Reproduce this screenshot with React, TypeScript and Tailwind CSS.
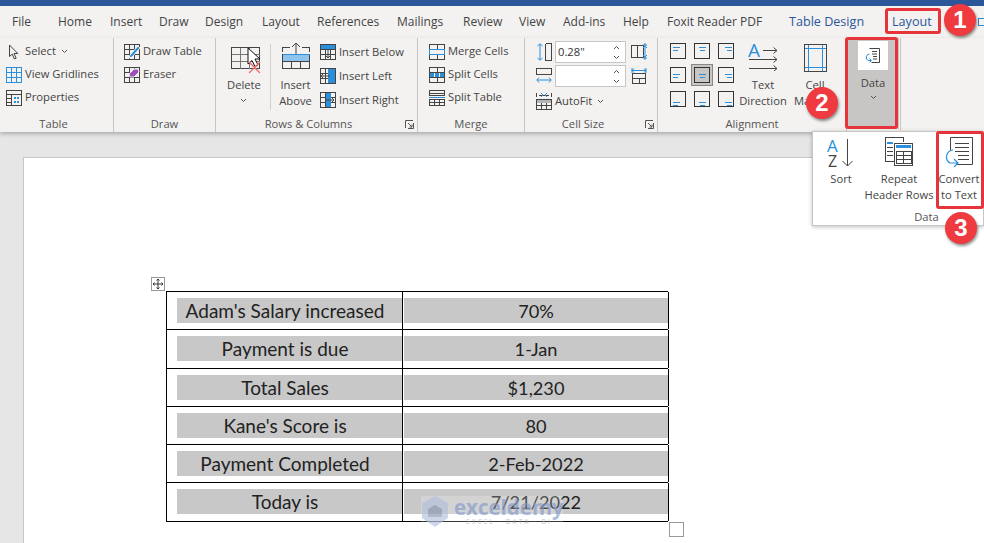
import React from "react";

const D = "#444444";
const B = "#2b8fdc";

const Ic = ({ w = 16, h = 16, children }: { w?: number; h?: number; children: React.ReactNode }) => (
  <svg width={w} height={h} viewBox={`0 0 ${w} ${h}`} fill="none" className="shrink-0" shapeRendering="crispEdges">{children}</svg>
);

const Chevron = ({ className = "" }: { className?: string }) => (
  <svg width="7" height="5" viewBox="0 0 7 5" fill="none" className={className}><path d="M1 1l2.5 2.5L6 1" stroke="#555" strokeWidth="1" /></svg>
);

const Launcher = () => (
  <svg width="9" height="9" viewBox="0 0 9 9" fill="none"><path d="M.5 8V.5H8M8.5 3v5.5H3M3 3l4 4M7 4.5V7H4.5" stroke="#555" /></svg>
);

const GridLines = ({ x = 0.5, y = 0.5, w = 15, h = 15, cols = [5, 10], rows = [5, 10], c = D }: any) => (
  <g stroke={c}>
    <rect x={x} y={y} width={w} height={h} />
    {cols.map((k: number) => <path key={"c" + k} d={`M${x + k} ${y}V${y + h}`} />)}
    {rows.map((k: number) => <path key={"r" + k} d={`M${x} ${y + k}H${x + w}`} />)}
  </g>
);

const icons: Record<string, React.ReactNode> = {
  select: <Ic><path d="M3.5 1v11.5l2.7-2.4 2.2 4.9 1.8-.8-2.2-4.7h3.8z" stroke={D} shapeRendering="auto" /></Ic>,
  view: <Ic><GridLines c={B} /></Ic>,
  props: <Ic><rect x=".5" y=".5" width="15" height="15" stroke={D} /><path d="M.5 4.5h15M5.5 4.5v11M.5 8.5h5M.5 12h5" stroke={D} /><rect x="8" y="7" width="2" height="2" fill={B} /><rect x="11" y="7" width="2" height="2" fill={B} /><rect x="8" y="11" width="2" height="2" fill={B} /><rect x="11" y="11" width="2" height="2" fill={B} /></Ic>,
  draw: <Ic><GridLines /><path d="M6 11l8-9 2 2-8 9-3 1z" fill={B} stroke="#f3f2f1" shapeRendering="auto" /></Ic>,
  eraser: <Ic><GridLines /><path d="M5 7l5-5h4l1 3-5 5H6z" fill="#a04fc0" stroke="#f3f2f1" shapeRendering="auto" /></Ic>,
  below: <Ic><GridLines /><rect x="1" y="1" width="14" height="4" fill={B} /><path d="M8 5v9M5 11l3 3 3-3" stroke={D} shapeRendering="auto" /></Ic>,
  left: <Ic><GridLines /><rect x="8" y="1" width="7" height="14" fill={B} /><path d="M10 8H1M4 5L1 8l3 3" stroke={D} shapeRendering="auto" /></Ic>,
  right: <Ic><GridLines /><rect x="6" y="1" width="5" height="14" fill={B} /><path d="M5 8h9M11 5l3 3-3 3" stroke={D} shapeRendering="auto" /></Ic>,
  merge: <Ic><rect x=".5" y=".5" width="15" height="15" stroke={D} /><path d="M.5 5.5h15M.5 10.5h15M8 .5v5M8 10.5v5" stroke={D} /><path d="M.5 5.5h15v5H.5z" stroke={B} /></Ic>,
  split: <Ic><rect x=".5" y=".5" width="15" height="15" stroke={D} /><path d="M.5 5.5h15M.5 10.5h15M8 .5v5M8 10.5v5" stroke={D} /><rect x="1" y="6" width="14" height="4" fill={B} /><path d="M5.5 6v4M10.5 6v4" stroke="#fff" /></Ic>,
  splitT: <Ic><rect x=".5" y=".5" width="15" height="5" stroke={D} /><path d="M0 7.5h16" stroke={B} /><rect x=".5" y="9.5" width="15" height="6" stroke={D} /><path d="M.5 3h15M5.5 9.5v6M10.5 9.5v6M.5 12.5h15" stroke={D} /></Ic>,
  height: <Ic h={18}><path d="M4 1v16M1.5 3L4 .8 6.5 3M1.5 15L4 17.2 6.5 15" stroke={B} shapeRendering="auto" /><path d="M9.5 .5h5.5v16.5H9.500" stroke={D} /><path d="M9.500.5v17" stroke={D} /></Ic>,
  width: <Ic h={18}><rect x=".5" y="1.500" width="15" height="6" stroke={D} /><path d="M1 13h14M3 10.500L.8 13 3 15.500M13 10.500L15.200 13 13 15.500" stroke={B} shapeRendering="auto" /></Ic>,
  distH: <Ic h={18}><rect x=".5" y="2.500" width="12" height="12" stroke={D} /><path d="M6.500 2.500v12" stroke={D} /><path d="M14 0v17M11.500 2l2.500 0 2.500 0M11.500 15h5M12 5l2-2 2 2M12 12l2 2 2-2" stroke={B} shapeRendering="auto" /></Ic>,
  distW: <Ic h={18}><path d="M1 1v5M15 1v5M1 3.500h14M3 1.500L1 3.500l2 2M13 1.500l2 2-2 2" stroke={B} shapeRendering="auto" /><rect x="1.500" y="6.500" width="13" height="10" stroke={D} /><path d="M1.500 11.500h13M8 11.500v5" stroke={D} /></Ic>,
  autofit: <Ic h={18}><path d="M.5 1v4M15.500 1v4M3 3h10" stroke={D} /><path d="M5 1l2 2M11 1L9 3M5 5l2-2M11 5L9 3" stroke={B} shapeRendering="auto" /><rect x=".5" y="7.500" width="15" height="10" stroke={D} /><rect x="1" y="8" width="14" height="3" fill="#b5b5b5" /><path d="M.5 13h15M5.500 11v6M10.500 11v6" stroke={D} /></Ic>,
};

const Row = ({ icon, label, chev, gap = "gap-[3px]", h = "h-[23px]" }: { icon: string; label: string; chev?: boolean; gap?: string; h?: string }) => (
  <div className={`flex items-center ${gap} ${h}`}>
    {icons[icon]}
    <span className="whitespace-nowrap">{label}</span>
    {chev && <Chevron className="ml-[2px]" />}
  </div>
);

const Group = ({ w, label, launcher, labelClass = "", children, className = "" }: { w: string; label: string; launcher?: boolean; labelClass?: string; children: React.ReactNode; className?: string }) => (
  <div className={`${w} h-full shrink-0 border-r border-[#c8c6c4] relative flex flex-col`}>
    <div className={`flex-1 min-h-0 ${className}`}>{children}</div>
    <div className={`h-[16px] text-center leading-[16px] text-[#555] ${labelClass}`}>{label}</div>
    {launcher && <div className="absolute right-[3px] bottom-[3px] flex"><Launcher /></div>}
  </div>
);

const AlignCell = ({ v, h, active }: { v: number; h: number; active?: boolean }) => {
  const y = v === 0 ? 4 : v === 1 ? 6.5 : 11;
  const x1 = h === 0 ? 3 : h === 1 ? 5 : 7;
  return (
    <div className={`w-[22px] h-[22px] flex items-center justify-center ${active ? "bg-[#c8c6c4] border border-[#8a8886]" : ""}`}>
      <Ic>
        <rect x=".5" y=".5" width="15" height="15" stroke="#333" />
        <path d={`M${x1} ${y + 0.5}h7M${x1 + (h === 2 ? 2 : h === 1 ? 1 : 0)} ${y + 3.5}h5`} stroke={B} />
      </Ic>
    </div>
  );
};

const Spin = ({ value }: { value?: string }) => (
  <div className="w-[71px] h-[22px] bg-white border border-[#c8c6c4] flex items-center justify-between pl-[2px] pr-[5px]">
    <span className="text-[#333]">{value}</span>
    <svg width="7" height="15" viewBox="0 0 7 15" fill="none"><path d="M1 4l2.500-2.500L6 4M1 11l2.500 2.500L6 11" stroke="#555" /></svg>
  </div>
);

const tabs: [string, string][] = [
  ["File", "w-[46px]"], ["Home", "w-[52px]"], ["Insert", "w-[49px]"], ["Draw", "w-[46px]"], ["Design", "w-[57px]"],
  ["Layout", "w-[55px]"], ["References", "w-[80px]"], ["Mailings", "w-[66px]"], ["Review", "w-[56px]"], ["View", "w-[44px]"],
  ["Add-ins", "w-[60px]"], ["Help", "w-[44px]"], ["Foxit Reader PDF", "w-[122px]"],
];

const rows = [
  ["Adam's Salary increased", "70%"], ["Payment is due", "1-Jan"], ["Total Sales", "$1,230"],
  ["Kane's Score is", "80"], ["Payment Completed", "2-Feb-2022"], ["Today is", "7/21/2022"],
];

const Badge = ({ n, className }: { n: number; className: string }) => (
  <div className={`absolute w-[32px] h-[32px] rounded-full bg-[#ef3b3f] text-white flex items-center justify-center text-[24px] font-bold shadow-[1px_2px_3px_rgba(0,0,0,0.45)] z-30 ${className}`} style={{ fontFamily: '"Liberation Sans", sans-serif' }}>{n}</div>
);

const RedBox = ({ className }: { className: string }) => (
  <div className={`absolute border-[3px] border-[#e5343a] rounded-[3px] z-20 pointer-events-none ${className}`} />
);

export default function App() {
  return (
    <div className="relative w-[984px] h-[543px] overflow-hidden flex flex-col bg-[#e6e6e6] text-[11.200px] text-[#444]" style={{ fontFamily: '"Open Sans", "Noto Sans", sans-serif' }}>
      <div className="h-[6px] bg-[#2b579a] shrink-0" />
      <div className="h-[32px] bg-[#f3f2f1] shrink-0 flex items-center pl-[12px] text-[12px] text-[#444]">
        {tabs.map(([t, w]) => <div key={t} className={`${w} whitespace-nowrap`}>{t}</div>)}
        <div className="text-[#2b579a] w-[103px] whitespace-nowrap text-[12.600px]">Table Design</div>
        <div className="text-[#2b579a] text-[12.600px]">Layout</div>
        <div className="ml-auto w-[6px] h-[8px] border border-[#2b8fdc] border-r-0" />
      </div>

      <div className="h-[94px] bg-[#f3f2f1] shrink-0 flex shadow-[0_2px_4px_rgba(0,0,0,0.25)] z-10 relative">
        <Group w="w-[114px]" label="Table" labelClass="pr-[6px]" className="pl-[6px] pt-[2px]">
          <Row icon="select" label="Select" chev />
          <Row icon="view" label="View Gridlines" />
          <Row icon="props" label="Properties" />
        </Group>
        <Group w="w-[102px]" label="Draw" className="pl-[10px] pt-[2px]">
          <Row icon="draw" label="Draw Table" />
          <Row icon="eraser" label="Eraser" />
        </Group>
        <Group w="w-[202px]" label="Rows & Columns" labelClass="pr-[16px]" launcher className="flex pt-[2px]">
          <div className="w-[54px] ml-[1px] flex flex-col items-center border-r border-[#d2d0ce] h-[66px] mt-[4px]">
            <div className="relative h-[30px] mt-[2px] pl-[14px] w-full">
              <Ic w={30} h={24}>
                <rect x=".5" y="1.500" width="28" height="21" stroke={D} />
                <path d="M.5 8.500h28M.5 15.500h28M9.500 1.500v21M18.500 1.500v21" stroke="#777" />
              </Ic>
              <svg width="14" height="22" viewBox="0 0 14 22" className="absolute left-[30px] top-[1px]"><path d="M1 1v16l4-3.500 3 6 3-1.500-3-6h5z" fill="#fff" stroke="#111" /></svg>
              <svg width="13" height="13" viewBox="0 0 13 13" className="absolute left-[31px] top-[15px]"><path d="M1 1l11 11M12 1L1 12" stroke="#ef6b6b" strokeWidth="1.300" /></svg>
            </div>
            <div className="mt-[1px] leading-[16px] pl-[1px]">Delete</div>
            <Chevron className="mt-[5px]" />
          </div>
          <div className="w-[49px] flex flex-col items-center">
            <div className="h-[33px] pt-[2px]">
              <Ic w={28} h={28}>
                <path d="M.5 10V5.500H8M20 5.500h7.500V10" stroke={D} />
                <path d="M14 1v17M10 5l4-4 4 4" stroke={D} shapeRendering="auto" />
                <rect x=".5" y="12" width="27" height="14" stroke={D} />
                <rect x="1" y="12" width="26" height="7" fill="#8cc4ee" />
                <path d="M.5 12.500h27" stroke={B} />
                <path d="M.5 19.500h27M9.500 19.500v7M18.500 19.500v7" stroke={D} />
              </Ic>
            </div>
            <div className="mt-[4px] leading-[16px] text-center whitespace-nowrap">Insert<br />Above</div>
          </div>
          <div>
            <Row icon="below" label="Insert Below" h="h-[24px]" />
            <Row icon="left" label="Insert Left" h="h-[24px]" />
            <Row icon="right" label="Insert Right" h="h-[24px]" />
          </div>
        </Group>
        <Group w="w-[107px]" label="Merge" className="pl-[11px] pt-[2px]">
          <Row icon="merge" label="Merge Cells" />
          <Row icon="split" label="Split Cells" />
          <Row icon="splitT" label="Split Table" />
        </Group>
        <Group w="w-[133px]" label="Cell Size" labelClass="pr-[16px]" launcher className="pl-[11px] pt-[2px]">
          <div className="flex items-center gap-[3px] h-[24px]">{icons.height}<Spin value={'0.28"'} /><span className="ml-[2px] flex">{icons.distH}</span></div>
          <div className="flex items-center gap-[3px] h-[24px]">{icons.width}<Spin /><span className="ml-[2px] flex">{icons.distW}</span></div>
          <div className="flex items-center gap-[3px] h-[24px] mt-[1px]">{icons.autofit}<span>AutoFit</span><Chevron className="ml-[2px]" /></div>
        </Group>
        <Group w="w-[189px]" label="Alignment" className="flex pl-[9px] pt-[2px]">
          <div className="grid grid-cols-[22px_22px_22px] gap-x-[2px] gap-y-[2px] h-fit">
            {[0, 1, 2].flatMap((v) => [0, 1, 2].map((h) => <AlignCell key={`${v}${h}`} v={v} h={h} active={v === 1 && h === 1} />))}
          </div>
          <div className="w-[52px] flex flex-col items-center shrink-0">
            <div className="h-[33px] pt-[3px] flex justify-center">
              <svg width="30" height="28" viewBox="0 0 30 28" fill="none">
                <text x="0" y="14" fontSize="19" fill={B} fontFamily="Open Sans">A</text>
                <path d="M15 7.500h14M25.500 4.500l3.500 3-3.500 3M1 16.500h28M25.500 13.500l3.500 3-3.500 3M1 25.500h28M25.500 22.500l3.500 3-3.500 3" stroke={D} />
              </svg>
            </div>
            <div className="mt-[4px] leading-[16px] text-center whitespace-nowrap">Text<br />Direction</div>
          </div>
          <div className="w-[52px] flex flex-col items-center shrink-0">
            <div className="h-[33px] pt-[4px] flex justify-center">
              <Ic w={23} h={28}>
                <rect x=".5" y=".5" width="22" height="27" stroke={D} />
                <path d="M4.500 1v26M18.500 1v26M1 4.500h21M1 23.500h21" stroke={B} />
              </Ic>
            </div>
            <div className="mt-[4px] leading-[16px] text-center whitespace-nowrap">Cell<br />Margins</div>
          </div>
        </Group>
        <div className="w-[52px] h-[91px] bg-[#c8c6c4] flex flex-col items-center shrink-0">
          <div className="w-[30px] h-[29px] bg-white mt-[3px] flex items-center justify-center">
            <svg width="18" height="18" viewBox="0 0 18 18" fill="none">
              <path d="M5.500 1.500h10v14h-8" stroke={D} /><path d="M8 4.500h5M8 7h5M9 9.500h4M9 12h4" stroke={D} />
              <path d="M5.500 7A3.500 3.500 0 0 0 4 13.500h3M5.500 11.500l2 2-2 2" stroke={B} />
            </svg>
          </div>
          <div className="mt-[5px] leading-[16px] text-[#444]">Data</div>
          <Chevron className="mt-[4px]" />
        </div>
        <div className="ml-[1px] w-[1px] h-[92px] bg-[#c8c6c4]" />
      </div>

      <div className="flex-1 min-h-0 pt-[25px] pl-[23px]">
        <div className="h-[400px] bg-white border-l border-t border-[#c6c6c6] pt-[133px] pl-[142px] relative">
          <div className="w-[502px] border-t border-l border-black leading-[26px] text-[#222]" style={{ fontFamily: "Lato, sans-serif" }}>
            {rows.map(([a, b]) => (
              <div key={a} className="grid grid-cols-[236px_266px] h-[38.300px] border-b border-black">
                <div className="border-r border-black pl-[10px] pt-[6px]">
                  <div className="h-[25px] bg-[#c8c8c8] pr-[9px] text-center text-[19px] whitespace-nowrap">{a}</div>
                </div>
                <div className="border-r border-black pl-[1px] pt-[6px]"><div className="h-[25px] bg-[#c8c8c8] text-center text-[18.200px]">{b}</div></div>
              </div>
            ))}
          </div>
        </div>
      </div>

      {/* table handles */}
      <div className="absolute left-[151px] top-[277px] w-[14px] h-[14px] border border-[#999] bg-white flex items-center justify-center">
        <svg width="12" height="12" viewBox="0 0 12 12" fill="none"><path d="M6 1v10M1 6h10M4.500 2.500L6 1l1.500 1.500M4.500 9.500L6 11l1.500-1.500M2.500 4.500L1 6l1.500 1.500M9.500 4.500L11 6 9.500 7.500" stroke="#333" /></svg>
      </div>
      <div className="absolute left-[669px] top-[522px] w-[15px] h-[15px] border border-[#999] bg-white" />

      {/* watermark */}
      <div className="absolute left-[421px] top-[496px] flex gap-[5px] bg-white/30 h-[27px] w-[142px] opacity-70 z-10">
        <svg width="28" height="32" viewBox="0 0 28 32" className="shrink-0"><path d="M14 0l13 7v15l-13 9L1 22V7z" fill="#b9c6e0" /><path d="M14 9l7 4v8h-14v-8z" fill="#8f9bb3" /></svg>
        <div className="flex flex-col items-center leading-none">
          <span className="text-[20.500px] font-bold text-[#8fa3d0] leading-[22px] whitespace-nowrap">exceldemy</span>
          <span className="text-[6.500px] tracking-[2px] text-[#aaa] whitespace-nowrap leading-[8px]">EXCEL · DATA · BI</span>
        </div>
      </div>

      {/* Data dropdown */}
      <div className="absolute left-[812px] top-[131px] w-[172px] h-[95px] bg-white border border-[#c8c6c4] shadow-[0_1px_4px_rgba(0,0,0,0.25)] z-10 flex flex-col text-[#444]">
        <div className="flex flex-1">
          <div className="w-[56px] shrink-0 flex flex-col items-center pt-[6px]">
            <div className="h-[33px]">
              <svg width="28" height="30" viewBox="0 0 28 30" fill="none">
                <text x="0" y="14" fontSize="17" fill={B} fontFamily="Open Sans">A</text>
                <text x="1" y="29" fontSize="16" fill={D} fontFamily="Open Sans">Z</text>
                <path d="M20.500 1v27M15.500 23l5 5 5-5" stroke={D} />
              </svg>
            </div>
            <div className="leading-[16px]">Sort</div>
          </div>
          <div className="w-[60px] shrink-0 flex flex-col items-center pt-[5px]">
            <div className="h-[34px]">
              <svg width="28" height="31" viewBox="0 0 28 31" fill="none" shapeRendering="crispEdges">
                <path d="M.5 24.500V.5h18v4" stroke={D} /><path d="M.5 24.500H9" stroke={D} />
                <rect x="2" y="5" width="6" height="2" fill={B} />
                <path d="M2 10h6M2 14h6M2 18h6" stroke={D} />
                <rect x="9.500" y="6.500" width="18" height="22" fill="#fff" stroke={D} />
                <rect x="11" y="8" width="15" height="3" fill={B} />
                <path d="M11 14.500h15v12H11zM11 18.500h15M11 22.500h15M18.500 14.500v12" stroke={D} />
              </svg>
            </div>
            <div className="leading-[16px] text-center whitespace-nowrap">Repeat<br />Header Rows</div>
          </div>
          <div className="w-[60px] shrink-0 flex flex-col items-center pt-[5px]">
            <div className="h-[34px]">
              <svg width="28" height="30" viewBox="0 0 28 30" fill="none">
                <path d="M5.500 14V.5h22v27H12" stroke={D} />
                <path d="M10 6.500h14M10 10.500h14M10 14.500h14M13 18.500h11M13 22.500h11" stroke={D} />
                <path d="M8 13a7 7 0 0 0-3 13h8M9 22l4 4-4 4" stroke={B} strokeWidth="1.200" />
              </svg>
            </div>
            <div className="leading-[16px] text-center whitespace-nowrap">Convert<br />to Text</div>
          </div>
        </div>
        <div className="h-[16px] leading-[16px] text-center pl-[57px] text-[#555]">Data</div>
      </div>

      <RedBox className="left-[885px] top-[8px] w-[56px] h-[26px]" />
      <RedBox className="left-[845px] top-[37px] w-[53px] h-[92px]" />
      <RedBox className="left-[936px] top-[131px] w-[48px] h-[78px]" />
      <Badge n={1} className="left-[944px] top-[4px]" />
      <Badge n={2} className="left-[806px] top-[87px]" />
      <Badge n={3} className="left-[945px] top-[212px]" />
    </div>
  );
}
